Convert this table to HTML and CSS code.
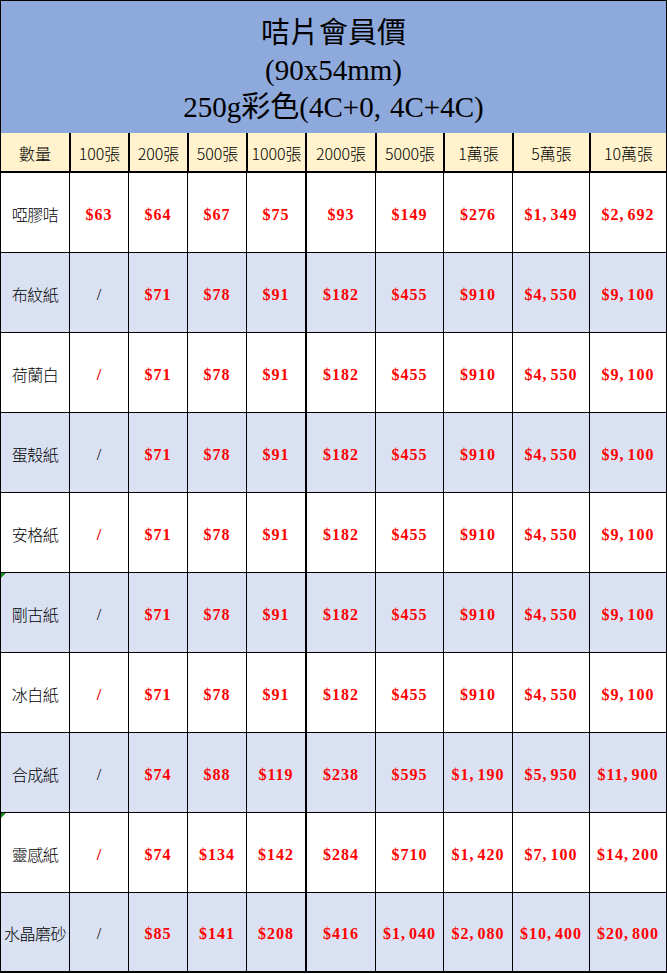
FILE: index.html
```html
<!DOCTYPE html>
<html lang="zh-Hant">
<head>
<meta charset="utf-8">
<title>咭片會員價</title>
<link rel="stylesheet" href="styles.css">
</head>
<body>
<div class="sheet">
  <div class="title">
    <div class="tline">咭片會員價</div>
    <div class="tline">(90x54mm)</div>
    <div class="tline">250g彩色(4C+0<span class="tcm">,</span>4C+4C)</div>
  </div>
  <div class="row head">
    <div class="cell c1">數量</div>
    <div class="cell c2">100張</div>
    <div class="cell c3">200張</div>
    <div class="cell c4">500張</div>
    <div class="cell c5">1000張</div>
    <div class="cell c6">2000張</div>
    <div class="cell c7">5000張</div>
    <div class="cell c8">1萬張</div>
    <div class="cell c9">5萬張</div>
    <div class="cell c10">10萬張</div>
  </div>

  <div class="row">
    <div class="cell c1 label">啞膠咭</div>
    <div class="cell c2 price">$63</div>
    <div class="cell c3 price">$64</div>
    <div class="cell c4 price">$67</div>
    <div class="cell c5 price">$75</div>
    <div class="cell c6 price">$93</div>
    <div class="cell c7 price">$149</div>
    <div class="cell c8 price">$276</div>
    <div class="cell c9 price">$1<span class="cm">,</span>349</div>
    <div class="cell c10 price">$2<span class="cm">,</span>692</div>
  </div>

  <div class="row alt">
    <div class="cell c1 label">布紋紙</div>
    <div class="cell c2 na">/</div>
    <div class="cell c3 price">$71</div>
    <div class="cell c4 price">$78</div>
    <div class="cell c5 price">$91</div>
    <div class="cell c6 price">$182</div>
    <div class="cell c7 price">$455</div>
    <div class="cell c8 price">$910</div>
    <div class="cell c9 price">$4<span class="cm">,</span>550</div>
    <div class="cell c10 price">$9<span class="cm">,</span>100</div>
  </div>

  <div class="row">
    <div class="cell c1 label">荷蘭白</div>
    <div class="cell c2 na red">/</div>
    <div class="cell c3 price">$71</div>
    <div class="cell c4 price">$78</div>
    <div class="cell c5 price">$91</div>
    <div class="cell c6 price">$182</div>
    <div class="cell c7 price">$455</div>
    <div class="cell c8 price">$910</div>
    <div class="cell c9 price">$4<span class="cm">,</span>550</div>
    <div class="cell c10 price">$9<span class="cm">,</span>100</div>
  </div>

  <div class="row alt">
    <div class="cell c1 label">蛋殼紙</div>
    <div class="cell c2 na">/</div>
    <div class="cell c3 price">$71</div>
    <div class="cell c4 price">$78</div>
    <div class="cell c5 price">$91</div>
    <div class="cell c6 price">$182</div>
    <div class="cell c7 price">$455</div>
    <div class="cell c8 price">$910</div>
    <div class="cell c9 price">$4<span class="cm">,</span>550</div>
    <div class="cell c10 price">$9<span class="cm">,</span>100</div>
  </div>

  <div class="row">
    <div class="cell c1 label">安格紙</div>
    <div class="cell c2 na red">/</div>
    <div class="cell c3 price">$71</div>
    <div class="cell c4 price">$78</div>
    <div class="cell c5 price">$91</div>
    <div class="cell c6 price">$182</div>
    <div class="cell c7 price">$455</div>
    <div class="cell c8 price">$910</div>
    <div class="cell c9 price">$4<span class="cm">,</span>550</div>
    <div class="cell c10 price">$9<span class="cm">,</span>100</div>
  </div>

  <div class="row alt">
    <div class="cell c1 label"><span class="mark"></span>剛古紙</div>
    <div class="cell c2 na">/</div>
    <div class="cell c3 price">$71</div>
    <div class="cell c4 price">$78</div>
    <div class="cell c5 price">$91</div>
    <div class="cell c6 price">$182</div>
    <div class="cell c7 price">$455</div>
    <div class="cell c8 price">$910</div>
    <div class="cell c9 price">$4<span class="cm">,</span>550</div>
    <div class="cell c10 price">$9<span class="cm">,</span>100</div>
  </div>

  <div class="row">
    <div class="cell c1 label">冰白紙</div>
    <div class="cell c2 na red">/</div>
    <div class="cell c3 price">$71</div>
    <div class="cell c4 price">$78</div>
    <div class="cell c5 price">$91</div>
    <div class="cell c6 price">$182</div>
    <div class="cell c7 price">$455</div>
    <div class="cell c8 price">$910</div>
    <div class="cell c9 price">$4<span class="cm">,</span>550</div>
    <div class="cell c10 price">$9<span class="cm">,</span>100</div>
  </div>

  <div class="row alt">
    <div class="cell c1 label">合成紙</div>
    <div class="cell c2 na">/</div>
    <div class="cell c3 price">$74</div>
    <div class="cell c4 price">$88</div>
    <div class="cell c5 price">$119</div>
    <div class="cell c6 price">$238</div>
    <div class="cell c7 price">$595</div>
    <div class="cell c8 price">$1<span class="cm">,</span>190</div>
    <div class="cell c9 price">$5<span class="cm">,</span>950</div>
    <div class="cell c10 price">$11<span class="cm">,</span>900</div>
  </div>

  <div class="row">
    <div class="cell c1 label"><span class="mark"></span>靈感紙</div>
    <div class="cell c2 na red">/</div>
    <div class="cell c3 price">$74</div>
    <div class="cell c4 price">$134</div>
    <div class="cell c5 price">$142</div>
    <div class="cell c6 price">$284</div>
    <div class="cell c7 price">$710</div>
    <div class="cell c8 price">$1<span class="cm">,</span>420</div>
    <div class="cell c9 price">$7<span class="cm">,</span>100</div>
    <div class="cell c10 price">$14<span class="cm">,</span>200</div>
  </div>

  <div class="row alt last">
    <div class="cell c1 label">水晶磨砂</div>
    <div class="cell c2 na">/</div>
    <div class="cell c3 price">$85</div>
    <div class="cell c4 price">$141</div>
    <div class="cell c5 price">$208</div>
    <div class="cell c6 price">$416</div>
    <div class="cell c7 price">$1<span class="cm">,</span>040</div>
    <div class="cell c8 price">$2<span class="cm">,</span>080</div>
    <div class="cell c9 price">$10<span class="cm">,</span>400</div>
    <div class="cell c10 price">$20<span class="cm">,</span>800</div>
  </div>
</div>
</body>
</html>
```

FILE: styles.css
```css
* { box-sizing: border-box; }

html, body {
  margin: 0;
  padding: 0;
  background: #ffffff;
}

.sheet {
  width: 667px;
  font-family: "Noto Sans CJK TC", "Noto Sans CJK SC", sans-serif;
  color: #000;
}

.title {
  height: 133px;
  background: #8ea9db;
  border-top: 1px solid #000;
  border-left: 1px solid #000;
  border-right: 1px solid #000;
  padding-top: 14px;
  text-align: center;
  font-family: "Liberation Serif", "Noto Sans CJK TC", serif;
  font-size: 29px;
  line-height: 37px;
}

.tline {
  white-space: nowrap;
}

.tcm {
  margin-right: 9px;
}

.row {
  display: grid;
  grid-template-columns: 69px 59px 59px 59px 59px 70px 68px 69px 77px 78px;
  height: 80px;
  background: #ffffff;
  border-bottom: 1px solid #000;
}

.row.alt {
  background: #d9e1f2;
}

.row.head {
  height: 40px;
  background: #fff2cc;
  border-bottom: 2px solid #000;
}

.row.last {
  border-bottom: 2px solid #000;
}

.cell {
  position: relative;
  display: flex;
  align-items: center;
  justify-content: center;
  border-left: 1px solid #000;
  white-space: nowrap;
  font-size: 16px;
}

.head .cell {
  font-weight: 300;
  padding-top: 1px;
}

.cell.c6 {
  border-left-width: 2px;
}

.cell.c10 {
  border-right: 1px solid #000;
}

.head .cell.c2,
.head .cell.c3,
.head .cell.c4,
.head .cell.c5,
.head .cell.c6,
.head .cell.c7,
.head .cell.c8,
.head .cell.c9,
.head .cell.c10 {
  border-left-width: 2px;
}

.label {
  font-weight: 300;
  letter-spacing: -0.5px;
  padding-top: 2px;
}

.price {
  font-family: "Liberation Serif", serif;
  font-weight: bold;
  color: #ff0000;
  letter-spacing: 1px;
  padding-top: 4px;
}

.cm {
  margin-right: 3px;
}

.na {
  font-family: "Liberation Serif", serif;
  font-size: 16px;
  color: #000;
  padding-top: 4px;
}

.na.red {
  color: #ff0000;
  font-weight: bold;
}

.mark {
  position: absolute;
  left: 0;
  top: 0;
  width: 0;
  height: 0;
  border-top: 5px solid #1a8a1a;
  border-right: 5px solid transparent;
}
```
